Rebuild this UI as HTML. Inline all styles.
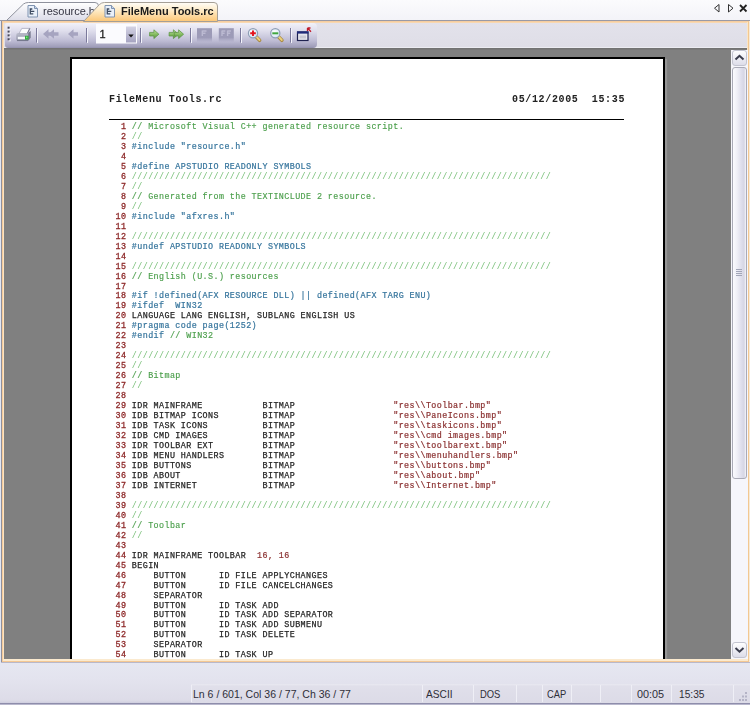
<!DOCTYPE html>
<html><head><meta charset="utf-8"><title>FileMenu Tools.rc</title>
<style>
*{box-sizing:border-box;margin:0;padding:0}
html,body{width:750px;height:705px;overflow:hidden}
body{position:relative;background:#e1e6f3;font-family:"Liberation Sans",sans-serif;font-size:11px;color:#222}
.abs{position:absolute}
#tabstrip{left:0;top:0;width:750px;height:21px;background:linear-gradient(#fbfbfd,#f3f3f8)}
#frame{left:1px;top:20px;width:749px;height:643px;background:#e0dfe8}
#frame i{position:absolute;display:block}
#tbrow{left:4px;top:23px;width:743px;height:25px;background:linear-gradient(#e3e2eb 0,#dfdee7 94%,#ececf2 97%,#ececf2 100%)}
#toolbar{left:5px;top:23px;width:312px;height:24.5px;border-radius:2px 4px 4px 3px;background:linear-gradient(#f1f1f9 0,#e0dfed 30%,#bdbbd3 72%,#a19fba 94%,#9290ae 100%)}
#gray{left:4px;top:48px;width:743px;height:611px;background:#808080;overflow:hidden}
#gray:before{content:"";position:absolute;left:0;top:0;width:100%;height:2px;background:linear-gradient(#707070,#7c7c7c)}
#page{left:66px;top:9px;width:595px;height:700px;background:#fff;border:2px solid #000;box-shadow:2px 2px 1px #969696}
#vs{left:731px;top:50px;width:17px;height:609px;background:#f6f6fb}
.sb{left:1px;width:15px;height:16px;border:1px solid #c3c4d0;border-radius:3px;background:linear-gradient(#fefeff,#dddde9)}
#thumb{left:1px;top:17px;width:15px;height:412px;border:1px solid #a9aab6;border-radius:3px;background:linear-gradient(90deg,#fbfbfe 0,#f0f0f7 30%,#dedeeb 65%,#d6d6e4 85%,#f6f6fb 100%)}
#below{left:0;top:663px;width:750px;height:42px;background:linear-gradient(#e6e7f1 0,#e3e3ee 40%,#dddce8 88%,#d4d3e2 94%,#8e8dab 95.5%,#8e8dab 97.5%,#b9b8cd 98%)}
#status{left:0;top:684px;width:750px;height:21px}
#panes{left:191px;top:0;width:559px;height:18.5px;background:linear-gradient(#e9e9f1 0,#e0dfea 12%,#dcdbe7 100%)}
#status i{position:absolute;display:block;top:1px;width:1px;height:17px;background:#efeff6}
#status span{position:absolute;top:4px;font-size:11px;line-height:12px;color:#2e2e38;white-space:pre;transform-origin:0 0}
.hd{will-change:transform;font-family:"Liberation Mono",monospace;font-weight:bold;font-size:10px;letter-spacing:0.65px;color:#222;white-space:pre;line-height:12px}
#code{will-change:transform;left:37.6px;top:63.5px;font-family:"Liberation Mono",monospace;font-size:8.4px;letter-spacing:0.42px;line-height:9.97px;color:#333}
.ln{height:9.97px;white-space:pre}
.n{color:#8e2a2a;-webkit-text-stroke:0.3px #8e2a2a}.c{color:#4a9e4a;-webkit-text-stroke:0.15px #4a9e4a}.p{color:#35749c;-webkit-text-stroke:0.2px #35749c}.s{color:#8a3030;-webkit-text-stroke:0.2px #8a3030}.k{color:#262626;-webkit-text-stroke:0.25px #262626}.sl{color:#74be74;-webkit-text-stroke:0}
</style></head><body>
<div id="tabstrip" class="abs"></div>
<div id="frame" class="abs">
 <i style="left:0;top:0;width:1px;height:643px;background:#8f8f9c"></i>
 <i style="left:1px;top:1px;width:1px;height:641px;background:#f5cb9a"></i>
 <i style="left:2px;top:2px;width:1px;height:639px;background:#fae3c4"></i>
 <i style="left:0;top:0;width:749px;height:1px;background:#96959f"></i>
 <i style="left:1px;top:1px;width:748px;height:1px;background:#f6cd9f"></i>
 <i style="left:2px;top:2px;width:746px;height:1px;background:#f8d8b2"></i>
 <i style="left:746px;top:2px;width:1px;height:639px;background:#fae6c8"></i>
 <i style="left:747px;top:1px;width:1px;height:641px;background:#f3c891"></i>
 <i style="left:748px;top:0;width:1px;height:643px;background:#f6ead8"></i>
 <i style="left:2px;top:639px;width:745px;height:2px;background:#fbeacf"></i>
 <i style="left:1px;top:641px;width:747px;height:1px;background:#f3c793"></i>
 <i style="left:0;top:642px;width:749px;height:1px;background:#b9b8ca"></i>
</div>
<div id="tbrow" class="abs"></div>
<div id="toolbar" class="abs"></div>
<svg class="abs" style="left:0;top:0;will-change:transform" width="750" height="22" viewBox="0 0 750 22">
 <defs>
  <linearGradient id="gi" x1="0" y1="0" x2="0" y2="1"><stop offset="0" stop-color="#ffffff"/><stop offset="1" stop-color="#dcdce8"/></linearGradient>
  <linearGradient id="ga" x1="0" y1="0" x2="0" y2="1"><stop offset="0" stop-color="#fffdf8"/><stop offset="0.4" stop-color="#feecc9"/><stop offset="1" stop-color="#fcc676"/></linearGradient>
  <g id="doc">
   <path d="M0.5,0.5 H7 L10,3.5 V12 H0.5 Z" fill="#e9f0fa" stroke="#7f93b0"/>
   <path d="M7,0.5 V3.5 H10" fill="#c9d6ea" stroke="#7f93b0"/>
   <path d="M2.2,4 H4.8 M2.2,6.4 H6.8 M2.2,8.9 H5.8 M2.8,3.4 V9.5" stroke="#3d4a60" stroke-width="1.3" fill="none"/>
  </g>
 </defs>
 <path d="M0,20.5 H750" stroke="#9a9aa6" fill="none"/>
 <path d="M6.5,20.5 L23.5,4 Q25.5,2.5 28.5,2.5 H95 Q98.5,2.5 98.5,6 V20.5 Z" fill="url(#gi)" stroke="#8e919c"/>
 <use href="#doc" x="27.5" y="5"/>
 <text x="43" y="15.2" font-family="Liberation Sans, sans-serif" font-size="11" fill="#333340" id="t1">resource.h</text>
 <path d="M83.5,21.5 L99.5,4.5 Q101.5,2.5 104.5,2.5 H214 Q217.5,2.5 217.5,6 V21.5 Z" fill="url(#ga)" stroke="#a59f96"/>
 <use href="#doc" x="104.5" y="5"/>
 <text x="121" y="15.2" font-family="Liberation Sans, sans-serif" font-size="11" font-weight="bold" fill="#1a1a1a" id="t2">FileMenu Tools.rc</text>
 <path d="M719,4.5 L714.5,8.2 L719,12 Z" fill="none" stroke="#333" stroke-width="1"/>
 <path d="M728.5,4.5 L733,8.2 L728.5,12 Z" fill="none" stroke="#333" stroke-width="1"/>
 <path d="M740,5 L746.5,11.5 M746.5,5 L740,11.5" stroke="#222" stroke-width="1.8" fill="none"/>
</svg>

<svg class="abs" style="left:0;top:22px;will-change:transform" width="330" height="26" viewBox="0 22 330 26">
 <defs>
  <linearGradient id="gbtn" x1="0" y1="0" x2="0" y2="1"><stop offset="0" stop-color="#d4d3e4"/><stop offset="1" stop-color="#a5a3c0"/></linearGradient>
  <linearGradient id="ggr" x1="0" y1="0" x2="0" y2="1"><stop offset="0" stop-color="#c2e2a2"/><stop offset="0.5" stop-color="#86bd62"/><stop offset="1" stop-color="#5e9544"/></linearGradient>
  <linearGradient id="gdis" x1="0" y1="0" x2="0" y2="1"><stop offset="0" stop-color="#9c9ab6"/><stop offset="0.7" stop-color="#9d9bb8"/><stop offset="1" stop-color="#a9a7c2" stop-opacity="0.3"/></linearGradient>
  <radialGradient id="glens" cx="0.4" cy="0.35" r="0.7"><stop offset="0" stop-color="#ffffff"/><stop offset="1" stop-color="#cfe4f2"/></radialGradient>
  <linearGradient id="gprn" x1="0" y1="0" x2="0" y2="1"><stop offset="0" stop-color="#c9cbd8"/><stop offset="1" stop-color="#8f91a6"/></linearGradient>
  <g id="sep"><path d="M0.5,0 V14.5" stroke="#7b799b" fill="none"/><path d="M1.5,0.5 V15" stroke="#f4f4fb" fill="none"/></g>
  <g id="rarr"><path d="M0.3,3.2 H4.6 V0.6 L9.6,5 L4.6,9.4 V6.8 H0.3 Z" fill="url(#ggr)" stroke="#568f3e" stroke-width="0.7"/></g>
  <g id="larr"><path d="M10,3.2 H5.5 V0.3 L0,5 L5.5,9.7 V6.8 H10 Z" fill="#a6a4c0"/></g>
  <g id="mag">
   <path d="M3.4,3.6 L6.6,7" stroke="#a98a45" stroke-width="3.6" stroke-linecap="round" fill="none"/>
   <path d="M3.6,3.6 L6.4,6.6" stroke="#ecd27c" stroke-width="2" stroke-linecap="round" fill="none"/>
   <circle cx="0" cy="0" r="4.6" fill="url(#glens)" stroke="#8e9db5" stroke-width="1.2"/>
  </g>
 </defs>
 <!-- gripper -->
 <g fill="#f6f6fb"><rect x="8.6" y="27.7" width="2" height="2"/><rect x="8.6" y="31.6" width="2" height="2"/><rect x="8.6" y="35.4" width="2" height="2"/><rect x="8.6" y="39.3" width="2" height="2"/></g>
 <g fill="#474758"><rect x="7.6" y="26.7" width="2" height="2"/><rect x="7.6" y="30.6" width="2" height="2"/><rect x="7.6" y="34.4" width="2" height="2"/><rect x="7.6" y="38.3" width="2" height="2"/></g>
 <!-- printer -->
 <g>
  <path d="M18,33 H28.2 L30.6,31 V37.8 L28.2,40.8 H18 Q16.3,40.8 16.3,39 V35 Q16.3,33 18,33 Z" fill="url(#gprn)"/>
  <path d="M28.2,33 L30.6,31 V37.8 L28.2,40.8 Z" fill="#77798f"/>
  <path d="M21.8,28.4 H29.8 L27.3,33.6 H19 Z" fill="#fcfcfe" stroke="#a2a4b6" stroke-width="0.7"/>
  <path d="M29.8,28.4 L27.4,33.4" stroke="#6c6e84" stroke-width="1" fill="none"/>
  <rect x="17.8" y="36.8" width="7.2" height="2.4" fill="#f6f8fb"/>
  <rect x="25" y="35.8" width="3.6" height="3.8" fill="#2fae3a"/>
  <rect x="26" y="36.6" width="1.4" height="1.6" fill="#7fe27f"/>
  <path d="M17,40.6 H28" stroke="#6e7084" stroke-width="0.9" fill="none"/>
 </g>
 <use href="#sep" x="36" y="28"/>
 <use href="#larr" x="43" y="29"/><use href="#larr" x="48.5" y="29"/>
 <use href="#larr" x="68" y="29"/>
 <use href="#sep" x="86" y="28"/>
 <!-- combo -->
 <rect x="96" y="24" width="41" height="19.5" fill="#fbfbfe"/>
 <rect x="126" y="26.5" width="10" height="16" fill="url(#gbtn)"/>
 <path d="M128.3,34.5 H133.7 L131,37.5 Z" fill="#111"/>
 <text x="99.5" y="38.3" font-family="Liberation Sans, sans-serif" font-size="11" fill="#222" stroke="#222" stroke-width="0.3">1</text>
 <use href="#sep" x="140" y="28"/>
 <use href="#rarr" x="149.3" y="29.2"/>
 <use href="#rarr" x="168.8" y="29.2"/><use href="#rarr" x="174" y="29.2"/>
 <use href="#sep" x="190" y="28"/>
 <!-- disabled page icons -->
 <rect x="197" y="28.2" width="15" height="13.5" fill="url(#gdis)"/>
 <path d="M202.3,30.5 V36 M202.3,31 H206.5 M202.3,33.2 H205.5" stroke="#bcbad2" stroke-width="1.4" fill="none"/>
 <rect x="218.8" y="28.2" width="15" height="13.5" fill="url(#gdis)"/>
 <path d="M222,30.5 V36 M222,31 H225.3 M222,33.2 H224.6 M227.6,30.5 V36 M227.6,31 H230.9 M227.6,33.2 H230.2" stroke="#bcbad2" stroke-width="1.4" fill="none"/>
 <use href="#sep" x="240" y="28"/>
 <!-- zoom in / out -->
 <use href="#mag" x="253" y="33.3"/>
 <path d="M250.2,33.3 H255.8 M253,30.5 V36.1" stroke="#e3141c" stroke-width="1.9" fill="none"/>
 <use href="#mag" x="275.3" y="33.3"/>
 <path d="M272.3,33.3 H278.3" stroke="#3fa63f" stroke-width="2" fill="none"/>
 <use href="#sep" x="290" y="28"/>
 <!-- window icon -->
 <rect x="297.5" y="32" width="10.5" height="8.5" fill="#e6e6ee" stroke="#1f2250" stroke-width="1.2"/>
 <rect x="297" y="31.4" width="11.5" height="2.2" fill="#1f2a7a"/>
 <rect x="299.5" y="35.5" width="6.5" height="3" fill="#c9c9d4"/>
 <path d="M307.5,28 H310.5 M307.5,28 V31 M307.8,28.3 L311,31.8" stroke="#c01a2a" stroke-width="1.3" fill="none"/>
</svg>

<div id="gray" class="abs">
 <div id="page" class="abs">
  <div class="abs hd" style="left:36.8px;top:35px">FileMenu Tools.rc</div>
  <div class="abs hd" style="right:38.4px;top:35px">05/12/2005  15:35</div>
  <div class="abs" style="left:37.2px;top:60px;width:515px;height:1px;background:#000"></div>
  <div id="code" class="abs">
<div class="ln"><span class="n">  1</span> <span class="c">// Microsoft Visual C++ generated resource script.</span></div>
<div class="ln"><span class="n">  2</span> <span class="c sl">//</span></div>
<div class="ln"><span class="n">  3</span> <span class="p">#include "resource.h"</span></div>
<div class="ln"><span class="n">  4</span> </div>
<div class="ln"><span class="n">  5</span> <span class="p">#define APSTUDIO READONLY SYMBOLS</span></div>
<div class="ln"><span class="n">  6</span> <span class="c sl">/////////////////////////////////////////////////////////////////////////////</span></div>
<div class="ln"><span class="n">  7</span> <span class="c sl">//</span></div>
<div class="ln"><span class="n">  8</span> <span class="c">// Generated from the TEXTINCLUDE 2 resource.</span></div>
<div class="ln"><span class="n">  9</span> <span class="c sl">//</span></div>
<div class="ln"><span class="n"> 10</span> <span class="p">#include "afxres.h"</span></div>
<div class="ln"><span class="n"> 11</span> </div>
<div class="ln"><span class="n"> 12</span> <span class="c sl">/////////////////////////////////////////////////////////////////////////////</span></div>
<div class="ln"><span class="n"> 13</span> <span class="p">#undef APSTUDIO READONLY SYMBOLS</span></div>
<div class="ln"><span class="n"> 14</span> </div>
<div class="ln"><span class="n"> 15</span> <span class="c sl">/////////////////////////////////////////////////////////////////////////////</span></div>
<div class="ln"><span class="n"> 16</span> <span class="c">// English (U.S.) resources</span></div>
<div class="ln"><span class="n"> 17</span> </div>
<div class="ln"><span class="n"> 18</span> <span class="p">#if !defined(AFX RESOURCE DLL) || defined(AFX TARG ENU)</span></div>
<div class="ln"><span class="n"> 19</span> <span class="p">#ifdef  WIN32</span></div>
<div class="ln"><span class="n"> 20</span> <span class="k">LANGUAGE LANG ENGLISH, SUBLANG ENGLISH US</span></div>
<div class="ln"><span class="n"> 21</span> <span class="p">#pragma code page(1252)</span></div>
<div class="ln"><span class="n"> 22</span> <span class="p">#endif </span><span class="c">// WIN32</span></div>
<div class="ln"><span class="n"> 23</span> </div>
<div class="ln"><span class="n"> 24</span> <span class="c sl">/////////////////////////////////////////////////////////////////////////////</span></div>
<div class="ln"><span class="n"> 25</span> <span class="c sl">//</span></div>
<div class="ln"><span class="n"> 26</span> <span class="c">// Bitmap</span></div>
<div class="ln"><span class="n"> 27</span> <span class="c sl">//</span></div>
<div class="ln"><span class="n"> 28</span> </div>
<div class="ln"><span class="n"> 29</span> <span class="k">IDR MAINFRAME           BITMAP                  </span><span class="s">"res\\Toolbar.bmp"</span></div>
<div class="ln"><span class="n"> 30</span> <span class="k">IDB BITMAP ICONS        BITMAP                  </span><span class="s">"res\\PaneIcons.bmp"</span></div>
<div class="ln"><span class="n"> 31</span> <span class="k">IDB TASK ICONS          BITMAP                  </span><span class="s">"res\\taskicons.bmp"</span></div>
<div class="ln"><span class="n"> 32</span> <span class="k">IDB CMD IMAGES          BITMAP                  </span><span class="s">"res\\cmd images.bmp"</span></div>
<div class="ln"><span class="n"> 33</span> <span class="k">IDR TOOLBAR EXT         BITMAP                  </span><span class="s">"res\\toolbarext.bmp"</span></div>
<div class="ln"><span class="n"> 34</span> <span class="k">IDB MENU HANDLERS       BITMAP                  </span><span class="s">"res\\menuhandlers.bmp"</span></div>
<div class="ln"><span class="n"> 35</span> <span class="k">IDB BUTTONS             BITMAP                  </span><span class="s">"res\\buttons.bmp"</span></div>
<div class="ln"><span class="n"> 36</span> <span class="k">IDB ABOUT               BITMAP                  </span><span class="s">"res\\about.bmp"</span></div>
<div class="ln"><span class="n"> 37</span> <span class="k">IDB INTERNET            BITMAP                  </span><span class="s">"res\\Internet.bmp"</span></div>
<div class="ln"><span class="n"> 38</span> </div>
<div class="ln"><span class="n"> 39</span> <span class="c sl">/////////////////////////////////////////////////////////////////////////////</span></div>
<div class="ln"><span class="n"> 40</span> <span class="c sl">//</span></div>
<div class="ln"><span class="n"> 41</span> <span class="c">// Toolbar</span></div>
<div class="ln"><span class="n"> 42</span> <span class="c sl">//</span></div>
<div class="ln"><span class="n"> 43</span> </div>
<div class="ln"><span class="n"> 44</span> <span class="k">IDR MAINFRAME TOOLBAR  </span><span class="s">16, 16</span></div>
<div class="ln"><span class="n"> 45</span> <span class="k">BEGIN</span></div>
<div class="ln"><span class="n"> 46</span> <span class="k">    BUTTON      ID FILE APPLYCHANGES</span></div>
<div class="ln"><span class="n"> 47</span> <span class="k">    BUTTON      ID FILE CANCELCHANGES</span></div>
<div class="ln"><span class="n"> 48</span> <span class="k">    SEPARATOR</span></div>
<div class="ln"><span class="n"> 49</span> <span class="k">    BUTTON      ID TASK ADD</span></div>
<div class="ln"><span class="n"> 50</span> <span class="k">    BUTTON      ID TASK ADD SEPARATOR</span></div>
<div class="ln"><span class="n"> 51</span> <span class="k">    BUTTON      ID TASK ADD SUBMENU</span></div>
<div class="ln"><span class="n"> 52</span> <span class="k">    BUTTON      ID TASK DELETE</span></div>
<div class="ln"><span class="n"> 53</span> <span class="k">    SEPARATOR</span></div>
<div class="ln"><span class="n"> 54</span> <span class="k">    BUTTON      ID TASK UP</span></div>
  </div>
 </div>
</div>
<div id="vs" class="abs">
 <div class="abs sb" style="top:0px"><svg class="abs" style="left:0;top:0" width="13" height="14" viewBox="0 0 13 14"><path d="M2.5,8.5 L6.5,4.8 L10.5,8.5" fill="none" stroke="#3a3c4c" stroke-width="2"/></svg></div>
 <div id="thumb" class="abs"><svg class="abs" style="left:3px;top:201px" width="7" height="8" viewBox="0 0 7 8"><path d="M0,0.5 H6 M0,2.5 H6 M0,4.5 H6 M0,6.5 H6" stroke="#a2a6b8" fill="none"/></svg></div>
 <div class="abs sb" style="top:592px"><svg class="abs" style="left:0;top:0" width="13" height="14" viewBox="0 0 13 14"><path d="M2.5,5 L6.5,8.7 L10.5,5" fill="none" stroke="#3a3c4c" stroke-width="2"/></svg></div>
</div>
<div id="below" class="abs"></div>
<div id="status" class="abs">
 <div id="panes" class="abs"></div>
 <i style="left:191px"></i><i style="left:422px"></i><i style="left:473px"></i><i style="left:516px"></i><i style="left:542px"></i><i style="left:571px"></i><i style="left:600px"></i><i style="left:631px"></i><i style="left:671px"></i><i style="left:733px"></i>
 <span style="left:193.2px;transform:scaleX(.956)">Ln 6 / 601, Col 36 / 77, Ch 36 / 77</span>
 <span style="left:425.7px;transform:scaleX(.925)">ASCII</span>
 <span style="left:480px;transform:scaleX(.855)">DOS</span>
 <span style="left:547.3px;transform:scaleX(.85)">CAP</span>
 <span style="left:637.3px;transform:scaleX(.985)">00:05</span>
 <span style="left:679px;transform:scaleX(.925)">15:35</span>
 <svg class="abs" style="left:736px;top:7px" width="13" height="12" viewBox="0 0 13 12"><g fill="#b4b3c6"><rect x="9" y="1" width="2" height="2"/><rect x="6" y="4.5" width="2" height="2"/><rect x="9" y="4.5" width="2" height="2"/><rect x="3" y="8" width="2" height="2"/><rect x="6" y="8" width="2" height="2"/><rect x="9" y="8" width="2" height="2"/></g></svg>
</div>
</body></html>
